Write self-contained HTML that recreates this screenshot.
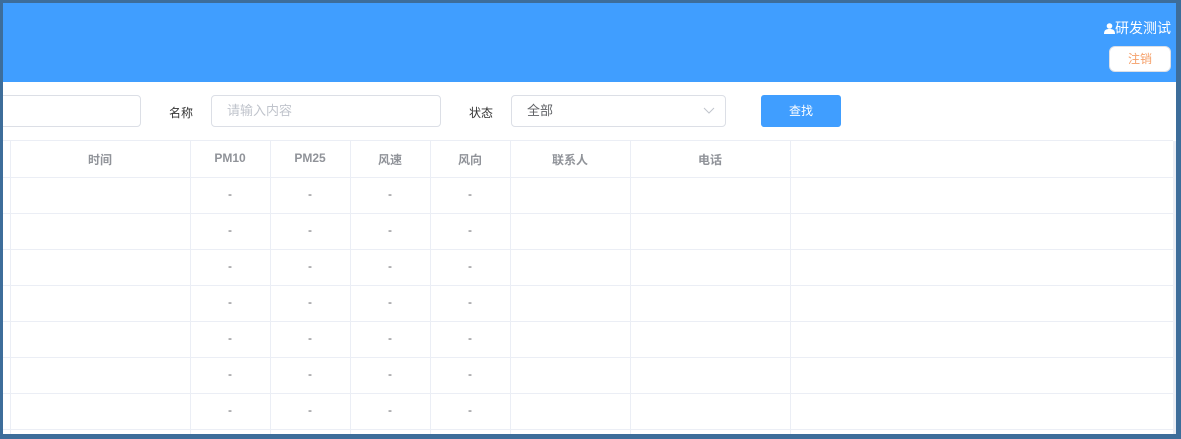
<!DOCTYPE html>
<html><head><meta charset="utf-8"><style>
*{margin:0;padding:0;box-sizing:border-box}
body{width:1181px;height:439px;overflow:hidden;background:#3d6d9a;font-family:"Liberation Sans","Noto Sans CJK SC",sans-serif;position:relative}
.in{position:absolute;left:3px;top:3px;width:1173px;height:431px;background:#fff;overflow:hidden}
.hd{position:absolute;left:0;top:0;width:1173px;height:79px;background:#409eff}
.user{position:absolute;right:5px;top:15px;color:#fff;font-size:14px}
.out{position:absolute;left:1106px;top:43px;width:62px;height:26px;border:1px solid #dcdfe6;border-radius:6px;background:#fff;color:#f5a06a;font-size:12px;text-align:center;line-height:24px}
.box{position:absolute;height:32px;border:1px solid #dcdfe6;border-radius:4px;background:#fff;font-size:13px;line-height:30px;padding-left:15px}
.lbl{position:absolute;font-size:12px;color:#333;top:101px}
.btn{position:absolute;left:758px;top:92px;width:80px;height:32px;background:#409eff;border-radius:3px;color:#fff;font-size:12px;text-align:center;line-height:32px}
.vl{position:absolute;top:138px;height:300px;width:1px;background:#ebeef5}
.hl{position:absolute;left:0;width:1170px;height:1px;background:#ebeef5}
.c{position:absolute;font-size:12px;color:#606266;text-align:center}
.th{font-weight:bold;color:#909399;top:149px}
</style></head><body><div class="in">
<div class="hd">
<div class="user"><svg width="11" height="11" viewBox="0 0 11 11" style="vertical-align:-1px"><circle cx="5.5" cy="3" r="2.8" fill="#fff"/><path d="M0 11C0 7 2 6 5.5 6S11 7 11 11Z" fill="#fff"/></svg>研发测试</div>
<div class="out">注销</div>
</div>
<div class="box" style="left:-10px;top:92px;width:148px"></div>
<div class="lbl" style="left:166px">名称</div>
<div class="box" style="left:208px;top:92px;width:230px;color:#c0c4cc">请输入内容</div>
<div class="lbl" style="left:466px">状态</div>
<div class="box" style="left:508px;top:92px;width:215px;color:#606266">全部<svg style="position:absolute;right:10px;top:11px" width="12" height="8" viewBox="0 0 12 8"><path d="M1 1l5 5 5-5" stroke="#c0c4cc" fill="none"/></svg></div>
<div class="btn">查找</div>
<div class="hl" style="top:137px"></div>
<div class="hl" style="top:174px"></div>
<div class="hl" style="top:210px"></div>
<div class="hl" style="top:246px"></div>
<div class="hl" style="top:282px"></div>
<div class="hl" style="top:318px"></div>
<div class="hl" style="top:354px"></div>
<div class="hl" style="top:390px"></div>
<div class="hl" style="top:426px"></div>
<div class="vl" style="left:7px"></div><div class="vl" style="left:187px"></div><div class="vl" style="left:267px"></div><div class="vl" style="left:347px"></div><div class="vl" style="left:427px"></div><div class="vl" style="left:507px"></div><div class="vl" style="left:627px"></div><div class="vl" style="left:787px"></div><div class="vl" style="left:1170px;width:3px"></div>
<div class="c th" style="left:7px;width:180px;top:148px">时间</div>
<div class="c th" style="left:187px;width:80px;top:148px">PM10</div>
<div class="c th" style="left:267px;width:80px;top:148px">PM25</div>
<div class="c th" style="left:347px;width:80px;top:148px">风速</div>
<div class="c th" style="left:427px;width:80px;top:148px">风向</div>
<div class="c th" style="left:507px;width:120px;top:148px">联系人</div>
<div class="c th" style="left:627px;width:160px;top:148px">电话</div>
<div id="rows"></div>
</div>
<script>
var h='';for(var r=0;r<7;r++){var t=184+r*36;[187,267,347,427].forEach(function(x){h+='<div class="c" style="left:'+x+'px;width:80px;top:'+t+'px">-</div>'})}
document.getElementById('rows').outerHTML=h;
</script>
</body></html>
